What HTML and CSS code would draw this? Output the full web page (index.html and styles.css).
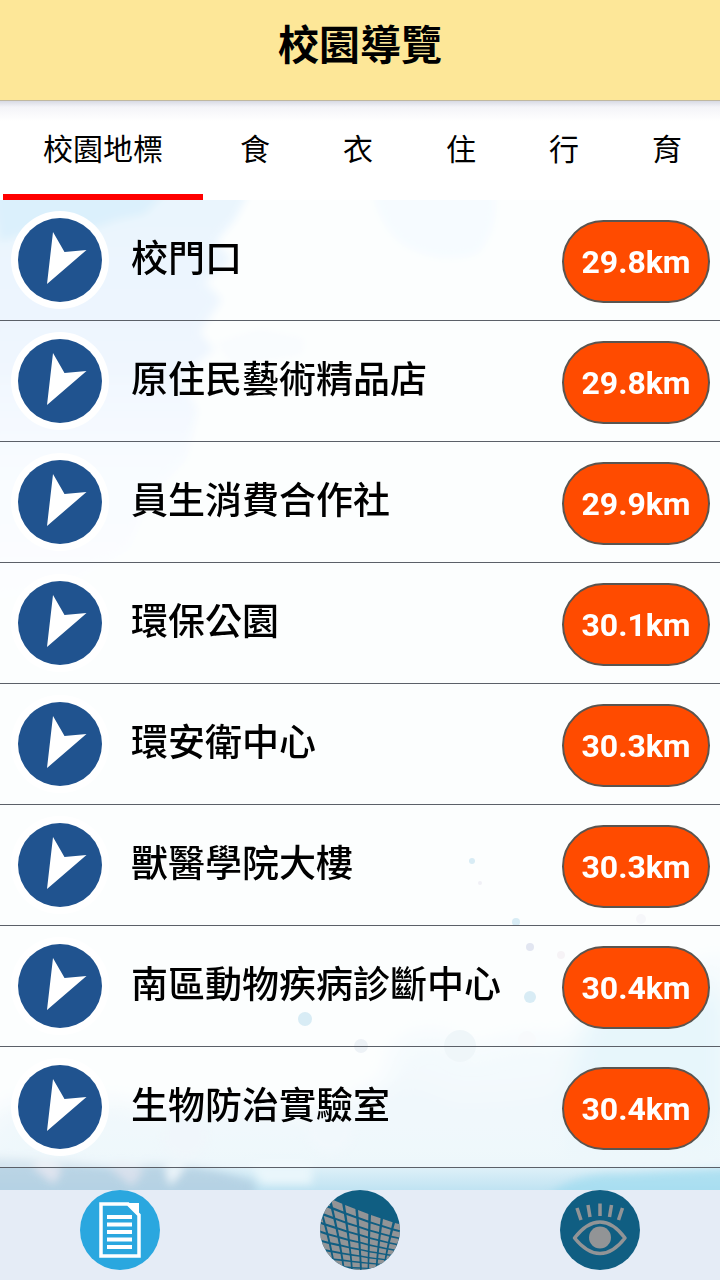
FILE: index.html
```html
<!DOCTYPE html>
<html lang="zh-Hant">
<head>
  <meta charset="UTF-8" />
  <meta name="viewport" content="width=device-width, initial-scale=1.0" />
  <title>校園導覽</title>
  <link rel="stylesheet" href="styles.css">
</head>
<body>
  <!-- shared symbol for the list rows -->
  <svg class="defs" aria-hidden="true">
    <symbol id="arrow" viewBox="0 0 98 98">
      <circle cx="49" cy="49" r="49" fill="#fff" />
      <circle cx="49" cy="49" r="42" fill="#20538f" />
      <path d="M42 21 L53.500 41 L75.500 39 L36 73 Z" fill="#fff" />
    </symbol>
  </svg>

  <header class="header">
    <h1>校園導覽</h1>
  </header>

  <div class="tabs">
    <button class="tab active">校園地標</button>
    <button class="tab">食</button>
    <button class="tab">衣</button>
    <button class="tab">住</button>
    <button class="tab">行</button>
    <button class="tab">育</button>
  </div>

  <main class="content">
    <!-- watercolor background -->
    <svg class="wash" viewBox="0 0 720 990" preserveAspectRatio="none" aria-hidden="true">
      <defs>
        <filter id="soft" x="-20%" y="-20%" width="140%" height="140%"><feGaussianBlur stdDeviation="12" /></filter>
        <filter id="edge" x="-20%" y="-20%" width="140%" height="140%"><feGaussianBlur stdDeviation="4" /></filter>
        <linearGradient id="top" x1="0" y1="0" x2="0" y2="1">
          <stop offset="0" stop-color="#dceffc" />
          <stop offset="0.400" stop-color="#e4f0fe" />
          <stop offset="0.650" stop-color="#f3f9ff" />
          <stop offset="1" stop-color="#fbfdff" />
        </linearGradient>
        <linearGradient id="floor" x1="0" y1="0" x2="0" y2="1">
          <stop offset="0" stop-color="#e8f5fa" stop-opacity="0" />
          <stop offset="0.700" stop-color="#e2f2f9" />
          <stop offset="1" stop-color="#c0e3f2" />
        </linearGradient>
      </defs>
      <rect width="720" height="990" fill="#fbfefe" />
      <g filter="url(#edge)">
        <path d="M-10 -10 H250 L236 18 L216 42 L232 60 L205 82 L222 100 L200 132 L214 150 L180 178 L198 210 L186 260 L150 300 L130 350 L60 390 L-10 400 Z" fill="url(#top)" />
        <path d="M-10 -10 H168 L145 14 L118 20 L85 32 L45 28 L0 42 Z" fill="#c4e6fa" />
        <path d="M215 142 L260 128 L306 138 L302 156 L232 166 Z" fill="#f5fafe" />
        <path d="M372 -10 H495 Q500 28 478 54 Q440 66 405 46 Q380 30 372 -10 Z" fill="#f0f9ff" />
      </g>
      <g filter="url(#soft)">
        <path d="M390 850 Q430 815 470 850 Q520 830 570 840 Q630 780 730 755 V1000 H370 Z" fill="#ecf7fc" />
        <path d="M-10 920 Q40 880 80 910 Q120 890 160 920 Q240 890 320 920 Q400 860 450 900 Q560 900 620 870 Q680 860 730 820 V1000 H-10 Z" fill="#e6f3fa" />
        <path d="M600 800 Q660 770 730 800 V980 H570 Q560 850 600 800 Z" fill="#d8f0f9" />
      </g>
      <rect y="905" width="720" height="85" fill="url(#floor)" />
      <g filter="url(#edge)">
        <path d="M-10 958 Q60 960 120 968 Q180 956 255 982 V1000 H-10 Z" fill="#b2cde0" opacity="0.800" />
        <path d="M32 966 Q45 956 62 968 L54 984 Z" fill="#dfe4ef" />
        <path d="M108 966 Q125 960 144 970 L132 986 Z" fill="#d8e0ec" />
        <path d="M165 966 H186 L170 986 Z" fill="#eef6fa" />
        <path d="M250 964 H312 V984 H262 Z" fill="#e9f6fb" />
        <path d="M545 1000 Q570 972 620 974 L730 968 V1000 Z" fill="#9edcf0" opacity="0.700" />
        <circle cx="185" cy="936" r="22" fill="#e6f1f8" />
        <circle cx="330" cy="930" r="24" fill="#e8f3fa" />
      </g>
      <g fill="#bfe0ee">
        <circle cx="305" cy="819" r="7" />
        <circle cx="530" cy="797" r="6" />
        <circle cx="472" cy="661" r="3" />
        <circle cx="516" cy="722" r="4" />
        <circle cx="530" cy="747" r="4" fill="#cfd6e8" />
        <circle cx="561" cy="755" r="4" fill="#f1ecf1" />
        <circle cx="480" cy="683" r="2" fill="#e6e6f0" />
        <circle cx="641" cy="719" r="5" fill="#f1f2f7" />
        <circle cx="361" cy="846" r="7" fill="#e2e9f1" />
        <circle cx="460" cy="846" r="16" fill="#e5f1f6" />
        <circle cx="527" cy="840" r="9" fill="#f3f7fa" />
      </g>
    </svg>

    <ul class="list">
      <li><a class="row" href="#"><svg class="pin" aria-hidden="true"><use href="#arrow" /></svg><span class="name">校門口</span><span class="distance">29.8km</span></a></li>
      <li><a class="row" href="#"><svg class="pin" aria-hidden="true"><use href="#arrow" /></svg><span class="name">原住民藝術精品店</span><span class="distance">29.8km</span></a></li>
      <li><a class="row" href="#"><svg class="pin" aria-hidden="true"><use href="#arrow" /></svg><span class="name">員生消費合作社</span><span class="distance">29.9km</span></a></li>
      <li><a class="row" href="#"><svg class="pin" aria-hidden="true"><use href="#arrow" /></svg><span class="name">環保公園</span><span class="distance">30.1km</span></a></li>
      <li><a class="row" href="#"><svg class="pin" aria-hidden="true"><use href="#arrow" /></svg><span class="name">環安衛中心</span><span class="distance">30.3km</span></a></li>
      <li><a class="row" href="#"><svg class="pin" aria-hidden="true"><use href="#arrow" /></svg><span class="name">獸醫學院大樓</span><span class="distance">30.3km</span></a></li>
      <li><a class="row" href="#"><svg class="pin" aria-hidden="true"><use href="#arrow" /></svg><span class="name">南區動物疾病診斷中心</span><span class="distance">30.4km</span></a></li>
      <li><a class="row" href="#"><svg class="pin" aria-hidden="true"><use href="#arrow" /></svg><span class="name">生物防治實驗室</span><span class="distance">30.4km</span></a></li>
    </ul>
  </main>

  <nav class="bottom-nav">
    <a href="#" aria-label="列表">
      <svg viewBox="0 0 80 80">
        <circle cx="40" cy="40" r="40" fill="#2aa7df" />
        <path d="M21 14 H48 L59 25 V66 H21 Z" fill="none" stroke="#fff" stroke-width="3.500" />
        <path d="M46 13 H59 V25 Z" fill="#fff" />
        <path d="M27 27 H52 M27 34.500 H52 M27 42 H52 M27 49.500 H52 M27 57 H52" stroke="#fff" stroke-width="4" />
      </svg>
    </a>
    <a href="#" aria-label="實景">
      <svg viewBox="0 0 80 80">
        <clipPath id="round"><circle cx="40" cy="40" r="40" /></clipPath>
        <circle cx="40" cy="40" r="40" fill="#105e82" />
        <g clip-path="url(#round)"><path id="tiles" fill="#929496" /></g>
      </svg>
    </a>
    <a href="#" aria-label="導覽">
      <svg viewBox="0 0 80 80">
        <circle cx="40" cy="40" r="40" fill="#105e82" />
        <g fill="none" stroke="#929496" stroke-width="3.500" stroke-linejoin="round">
          <path d="M14.500 48 Q27 32 40 32 Q53 32 65 48 Q53 63.500 40 63.500 Q27 63.500 14.500 48 Z" />
          <path d="M17 18 L21 30 M28 15 L30 27 M40 13.500 V26 M51.500 15 L49.500 27 M62.500 18 L58.500 30" />
        </g>
        <circle cx="40" cy="47.500" r="11" fill="#929496" />
      </svg>
    </a>
  </nav>

  <script src="tiles.js"></script>
</body>
</html>
```
FILE: styles.css
```css
* {
  box-sizing: border-box;
}

body {
  margin: 0;
  min-height: 100vh;
  display: flex;
  flex-direction: column;
  background: #fff;
  color: #000;
  font-family: Roboto, "Noto Sans CJK TC", sans-serif;
}

.defs {
  display: none;
}

.header {
  height: 101px;
  padding-bottom: 8px;
  display: flex;
  align-items: center;
  justify-content: center;
  background: #fde798;
  border-bottom: 1px solid #c0b8a0;
}

h1 {
  margin: 0;
  font-size: 41px;
  line-height: 60px;
  font-weight: 700;
}

.tabs {
  height: 99px;
  padding-left: 3px;
  display: flex;
  gap: 1px;
  overflow: hidden;
  background: linear-gradient(#d8dae4, #f4f4f8 6px, #fff 20px);
}

.tab {
  flex: none;
  padding: 4px 36px 0;
  border: none;
  border-bottom: 6px solid transparent;
  background: none;
  color: #000;
  font: 400 30px/44px Roboto, "Noto Sans CJK TC", sans-serif;
  cursor: pointer;
}

.tab.active {
  padding: 4px 40px 0;
  border-bottom-color: #f00;
}

.content {
  position: relative;
  flex: 1;
}

.wash {
  position: absolute;
  inset: 0;
  width: 100%;
  height: 100%;
}

.list {
  position: relative;
  margin: 0;
  padding: 0;
  list-style: none;
}

.row {
  display: flex;
  align-items: center;
  height: 121px;
  padding: 0 10px 0 11px;
  border-bottom: 1px solid #5b6068;
  background: rgba(255, 255, 255, 0.4);
  color: #000;
  text-decoration: none;
}

.pin {
  flex: none;
  width: 98px;
  height: 98px;
}

.name {
  flex: 1;
  margin-left: 22px;
  font-size: 37px;
  line-height: 54px;
  font-weight: 500;
}

.distance {
  width: 148px;
  height: 83px;
  margin-top: 3px;
  border: 2px solid #5a5550;
  border-radius: 42px;
  background: #ff4b00;
  color: #fff;
  font-size: 32px;
  line-height: 80px;
  font-weight: 700;
  text-align: center;
}

.bottom-nav {
  height: 90px;
  display: flex;
  background: #e5ecf6;
}

.bottom-nav a {
  flex: 1;
  text-align: center;
}

.bottom-nav svg {
  display: block;
  width: 80px;
  height: 80px;
  margin: 0 auto;
}
```
FILE: tiles.js
```javascript
// curved wall of tiles in the middle nav icon
// column edges: [x at the top, y at the top, x at the bottom]
const edges = [
  [-38, -21, -13], [-31, -11, -3], [-17, -4, 7], [-3, 3, 16], [11, 9, 25], [25, 15, 33],
  [38, 20, 42], [51, 25, 49], [63, 29, 57], [75, 33, 64], [86, 36, 71], [96, 39, 78], [106, 42, 85]
];
const rows = 9;
const bottom = 84;

function depth(v) {
  return (1 - Math.pow(0.93, v)) / (1 - Math.pow(0.93, rows));
}

function point(u, v) {
  const i = Math.floor(u);
  const a = edges[i];
  const b = edges[i + 1];
  const [x0, y0, x1] = a.map((n, k) => n + (b[k] - n) * (u - i));
  const t = depth(v);
  const x = x0 + (x1 - x0) * (1 - Math.pow(1 - t, 1.3));
  const y = y0 + (bottom - y0) * t;
  return x.toFixed(1) + ' ' + y.toFixed(1);
}

let d = '';
for (let u = 0; u < edges.length - 1; u++) {
  for (let v = 0; v < rows; v++) {
    d += 'M' + [point(u, v), point(u + 0.8, v), point(u + 0.8, v + 0.75), point(u, v + 0.75)].join('L') + 'Z';
  }
}
document.getElementById('tiles').setAttribute('d', d);
```
